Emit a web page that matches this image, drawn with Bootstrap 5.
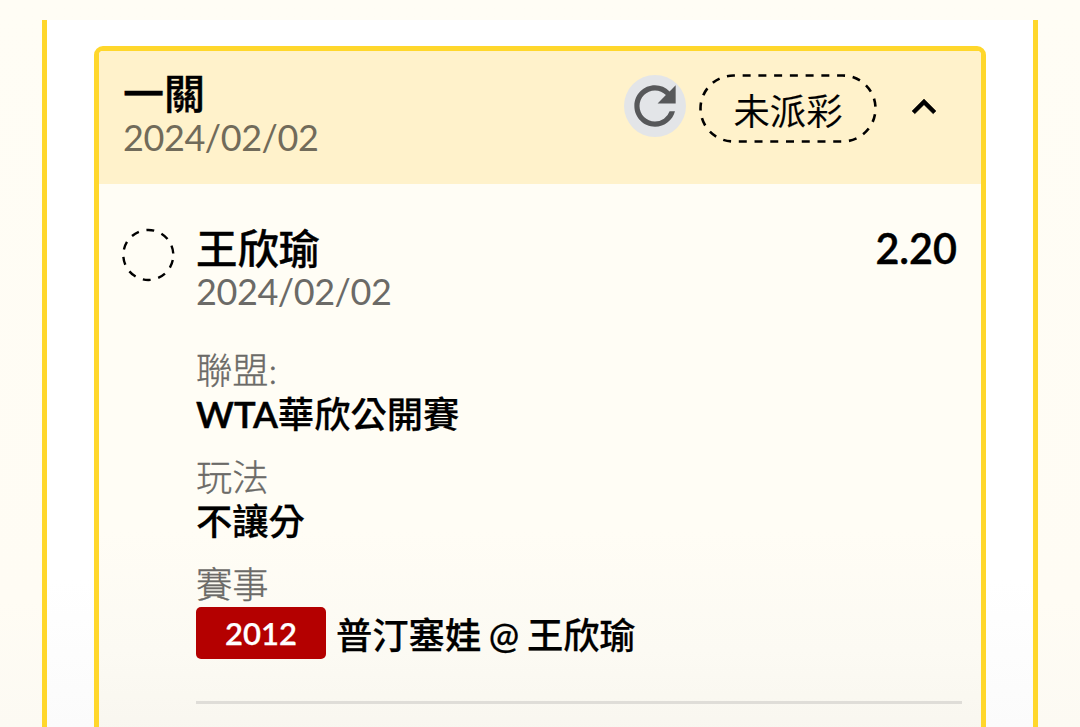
<!DOCTYPE html>
<html lang="zh-Hant">
<head>
  <meta charset="UTF-8" />
  <meta name="viewport" content="width=device-width, initial-scale=1" />
  <title>一關</title>
  <link
    href="https://cdn.jsdelivr.net/npm/bootstrap@5.3.3/dist/css/bootstrap.min.css"
    rel="stylesheet"
  />
  <style>
    body {
      height: 727px;
      padding: 20px 42px 0;
      background: linear-gradient(#fffdf5 0, #fffcf4 600px, #fcfaf3 727px);
      color: #000;
      font-family: Lato, "Noto Sans CJK TC", sans-serif;
      font-size: 36px;
      line-height: 43px;
    }

    .slip-panel {
      height: 707px;
      padding: 26px 47px 0;
      border: solid #ffd72b;
      border-width: 0 5px;
      background: linear-gradient(#fff 560px, #fbfbfb);
    }

    .slip {
      height: 700px;
      border: 5px solid #ffd72b;
      border-radius: 9px;
      background: linear-gradient(#fffdf5 480px, #fcfaf3 600px, #f8f6ef 690px);
    }

    .slip-header {
      height: 133px;
      padding: 20px 26px 0 24px;
      background: #fff2cb;
      border-radius: 4px 4px 0 0;
    }

    .slip-title {
      font-size: 41px;
      line-height: 47px;
      font-weight: 500;
      -webkit-text-stroke: .4px;
    }

    .slip-header .slip-title {
      line-height: 45px;
    }

    .muted-text {
      color: #6b6a67;
    }

    .slip-header .muted-text {
      color: #716b5a;
    }

    .slip-date {
      letter-spacing: -.42px;
      line-height: 42px;
    }

    .refresh-btn {
      width: 62px;
      height: 62px;
      margin: 4px 13px 0 0;
      background: #e3e5e8;
    }

    .status-pill {
      width: 178px;
      height: 69px;
      margin: 3px 23px 0 0;
    }

    .status-pill svg {
      position: absolute;
      inset: 0;
    }

    .status-text {
      font-weight: 350;
      font-size: 36.3px;
      padding-top: 5px;
      -webkit-text-stroke: .2px;
    }

    .chevron {
      width: 48px;
      height: 48px;
      margin: 12px 7px 0 0;
    }

    .slip-body {
      padding: 40px 19px 0 22px;
    }

    .leg-mark {
      width: 54px;
      height: 54px;
      margin: 4px 21px 0 0;
    }

    .leg-title {
      font-size: 41.4px;
      padding-top: 1px;
      margin-bottom: -2px;
    }

    .leg-price {
      padding-right: 5px;
      font-size: 41.3px;
      font-weight: 600;
      line-height: 48px;
      margin-bottom: -2px;
    }

    .detail-list {
      margin-top: 37px;
    }

    .detail-label {
      font-size: 36.3px;
      font-weight: 300;
      line-height: 43px;
      -webkit-text-stroke: .35px;
    }

    .detail-value {
      font-size: 36.3px;
      font-weight: 500;
      line-height: 45px;
      -webkit-text-stroke: .25px;
    }

    .latin-name {
      font-weight: 600;
      -webkit-text-stroke: .5px;
    }

    .detail-row {
      margin-bottom: 19px;
    }

    .match-row {
      padding-top: 1px;
    }

    .match-no {
      width: 130px;
      height: 52px;
      margin-right: 10px;
      border-radius: 5px;
      background: #b40000;
      color: #fff;
      font-size: 31px;
      font-weight: 600;
    }

    .match-teams {
      padding-top: 4px;
      word-spacing: -1.5px;
    }

    .leg-divider {
      height: 3px;
      margin-top: 42px;
      background: #dfddd8;
    }
  </style>
</head>

<body class="overflow-hidden">
  <main class="slip-panel overflow-hidden">
    <div class="slip">
      <div class="slip-header d-flex align-items-start">
        <div class="me-auto">
          <div class="slip-title">一關</div>
          <div class="slip-date muted-text">2024/02/02</div>
        </div>
        <button class="refresh-btn btn p-0 border-0 rounded-circle d-flex" aria-label="重新整理">
          <svg width="62" height="62" viewBox="0 0 24 24" fill="#57585a">
            <path d="M17.65 6.35A7.96 7.96 0 0 0 12 4c-4.42 0-7.99 3.58-7.99 8s3.57 8 7.99 8c3.73 0 6.84-2.55 7.73-6h-2.08A5.99 5.99 0 0 1 12 18c-3.31 0-6-2.69-6-6s2.69-6 6-6c1.66 0 3.14.69 4.22 1.78L13 11h7V4z" />
          </svg>
        </button>
        <div class="status-pill position-relative d-flex align-items-center justify-content-center">
          <svg width="178" height="69" fill="none" stroke="#000" stroke-width="2.6">
            <rect x="1.5" y="1.5" width="175" height="66" rx="33" pathLength="425.25" stroke-dasharray="8 7.75" stroke-dashoffset="6.6" />
          </svg>
          <span class="status-text">未派彩</span>
        </div>
        <svg class="chevron" viewBox="0 0 24 24">
          <path d="M12 8l-6 6 1.41 1.41L12 10.83l4.59 4.58L18 14z" stroke="#000" stroke-width=".25" />
        </svg>
      </div>

      <div class="slip-body d-flex align-items-start">
        <svg class="leg-mark flex-shrink-0" fill="none" stroke="#000" stroke-width="2.4">
          <circle cx="27.3" cy="27" r="25" stroke-dasharray="8 7.7" stroke-dashoffset="-5.2" />
        </svg>
        <div class="flex-grow-1">
          <div class="slip-title d-flex justify-content-between">
            <span class="leg-title">王欣瑜</span>
            <span class="leg-price">2.20</span>
          </div>
          <div class="slip-date muted-text">2024/02/02</div>

          <div class="detail-list">
            <div class="detail-row">
              <div class="detail-label muted-text">聯盟:</div>
              <div class="detail-value"><span class="latin-name">WTA</span>華欣公開賽</div>
            </div>
            <div class="detail-row">
              <div class="detail-label muted-text">玩法</div>
              <div class="detail-value">不讓分</div>
            </div>
            <div class="detail-label muted-text">賽事</div>
            <div class="detail-value match-row d-flex align-items-center">
              <span class="match-no d-flex align-items-center justify-content-center">2012</span>
              <span class="match-teams">普汀塞娃 @ 王欣瑜</span>
            </div>
          </div>
          <div class="leg-divider"></div>
        </div>
      </div>
    </div>
  </main>

  <script src="https://cdn.jsdelivr.net/npm/bootstrap@5.3.3/dist/js/bootstrap.bundle.min.js"></script>
</body>
</html>
